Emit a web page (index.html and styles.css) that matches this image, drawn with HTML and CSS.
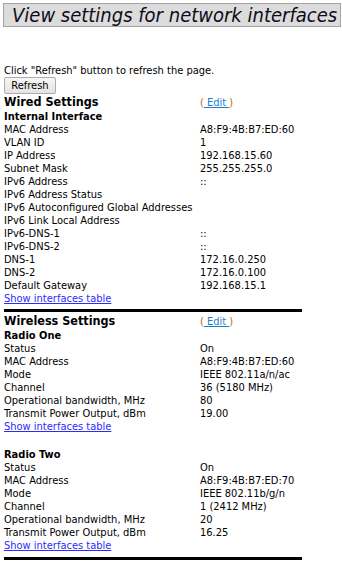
FILE: index.html
```html
<!DOCTYPE html>
<html>
<head>
<meta charset="utf-8">
<link rel="stylesheet" href="styles.css">
</head>
<body>
<div class="title">View settings for network interfaces</div>
<div class="intro">Click "Refresh" button to refresh the page.</div>
<button class="refresh">Refresh</button>
<table class="info">
<tr><td class="h1">Wired Settings</td><td class="edit">(<a href="#"> Edit </a>)</td></tr>
<tr><td class="h2" colspan="2">Internal Interface</td></tr>
<tr><td>MAC Address</td><td>A8:F9:4B:B7:ED:60</td></tr>
<tr><td>VLAN ID</td><td>1</td></tr>
<tr><td>IP Address</td><td>192.168.15.60</td></tr>
<tr><td>Subnet Mask</td><td>255.255.255.0</td></tr>
<tr><td>IPv6 Address</td><td>::</td></tr>
<tr><td>IPv6 Address Status</td><td></td></tr>
<tr><td>IPv6 Autoconfigured Global Addresses</td><td></td></tr>
<tr><td>IPv6 Link Local Address</td><td></td></tr>
<tr><td>IPv6-DNS-1</td><td>::</td></tr>
<tr><td>IPv6-DNS-2</td><td>::</td></tr>
<tr><td>DNS-1</td><td>172.16.0.250</td></tr>
<tr><td>DNS-2</td><td>172.16.0.100</td></tr>
<tr><td>Default Gateway</td><td>192.168.15.1</td></tr>
<tr><td colspan="2"><a class="show" href="#">Show interfaces table</a></td></tr>
<tr><td colspan="2" class="rule"><div class="bar"></div></td></tr>
<tr><td class="h1">Wireless Settings</td><td class="edit">(<a href="#"> Edit </a>)</td></tr>
<tr><td class="h2" colspan="2">Radio One</td></tr>
<tr><td>Status</td><td>On</td></tr>
<tr><td>MAC Address</td><td>A8:F9:4B:B7:ED:60</td></tr>
<tr><td>Mode</td><td>IEEE 802.11a/n/ac</td></tr>
<tr><td>Channel</td><td>36 (5180 MHz)</td></tr>
<tr><td>Operational bandwidth, MHz</td><td>80</td></tr>
<tr><td>Transmit Power Output, dBm</td><td>19.00</td></tr>
<tr><td colspan="2"><a class="show" href="#">Show interfaces table</a></td></tr>
<tr><td colspan="2" class="gap"></td></tr>
<tr><td class="h2" colspan="2">Radio Two</td></tr>
<tr><td>Status</td><td>On</td></tr>
<tr><td>MAC Address</td><td>A8:F9:4B:B7:ED:70</td></tr>
<tr><td>Mode</td><td>IEEE 802.11b/g/n</td></tr>
<tr><td>Channel</td><td>1 (2412 MHz)</td></tr>
<tr><td>Operational bandwidth, MHz</td><td>20</td></tr>
<tr><td>Transmit Power Output, dBm</td><td>16.25</td></tr>
<tr><td colspan="2"><a class="show" href="#">Show interfaces table</a></td></tr>
<tr><td colspan="2" class="rule last"><div class="bar"></div></td></tr>
</table>
</body>
</html>
```
FILE: styles.css
```css
html, body {
  margin: 0;
  padding: 0;
  background: #fff;
}
body {
  font-family: "DejaVu Sans Condensed", "DejaVu Sans", Verdana, sans-serif;
  font-size: 11px;
  color: #000;
  padding: 3px 0 0 3px;
  overflow: hidden;
}
.title {
  box-sizing: border-box;
  width: 338px;
  height: 24px;
  border: 1px solid #a4a4a4;
  background: #dcdcdc;
  font-style: italic;
  font-size: 20px;
  line-height: 22px;
  padding-left: 8px;
  white-space: nowrap;
  overflow: hidden;
  color: #0d0d1a;
}
.intro {
  margin-top: 37px;
  padding-left: 1px;
  height: 13px;
  line-height: 13px;
}
.refresh {
  display: block;
  box-sizing: border-box;
  margin: 0 0 0 1px;
  font-family: inherit;
  font-size: 11px;
  line-height: 13px;
  padding: 1px 6px;
  height: 17px;
  width: 52px;
  border: 1px solid #adadad;
  border-radius: 2px;
  background: linear-gradient(#f6f6f6, #e4e4e4);
  color: #000;
}
.info {
  border-collapse: collapse;
  width: 298px;
  margin-left: 1px;
}
.info td {
  padding: 0;
  height: 13px;
  line-height: 13px;
  vertical-align: middle;
  white-space: nowrap;
}
.info td:first-child {
  width: 196px;
}
.info td.h1 {
  font-weight: bold;
  font-size: 12.5px;
  height: 16px;
  line-height: 16px;
}
.info td.h2 {
  font-weight: bold;
}
.edit {
  color: #b86a00;
}
.edit a {
  color: #1a7fd0;
}
a.show {
  color: #2b2bff;
}
.info td.rule {
  height: auto;
  line-height: 0;
  padding: 4px 0 1px;
}
.info td.rule.last {
  padding-top: 5px;
}
.bar {
  height: 3px;
  background: #000;
}
.info td.gap {
  height: 15px;
}
```
